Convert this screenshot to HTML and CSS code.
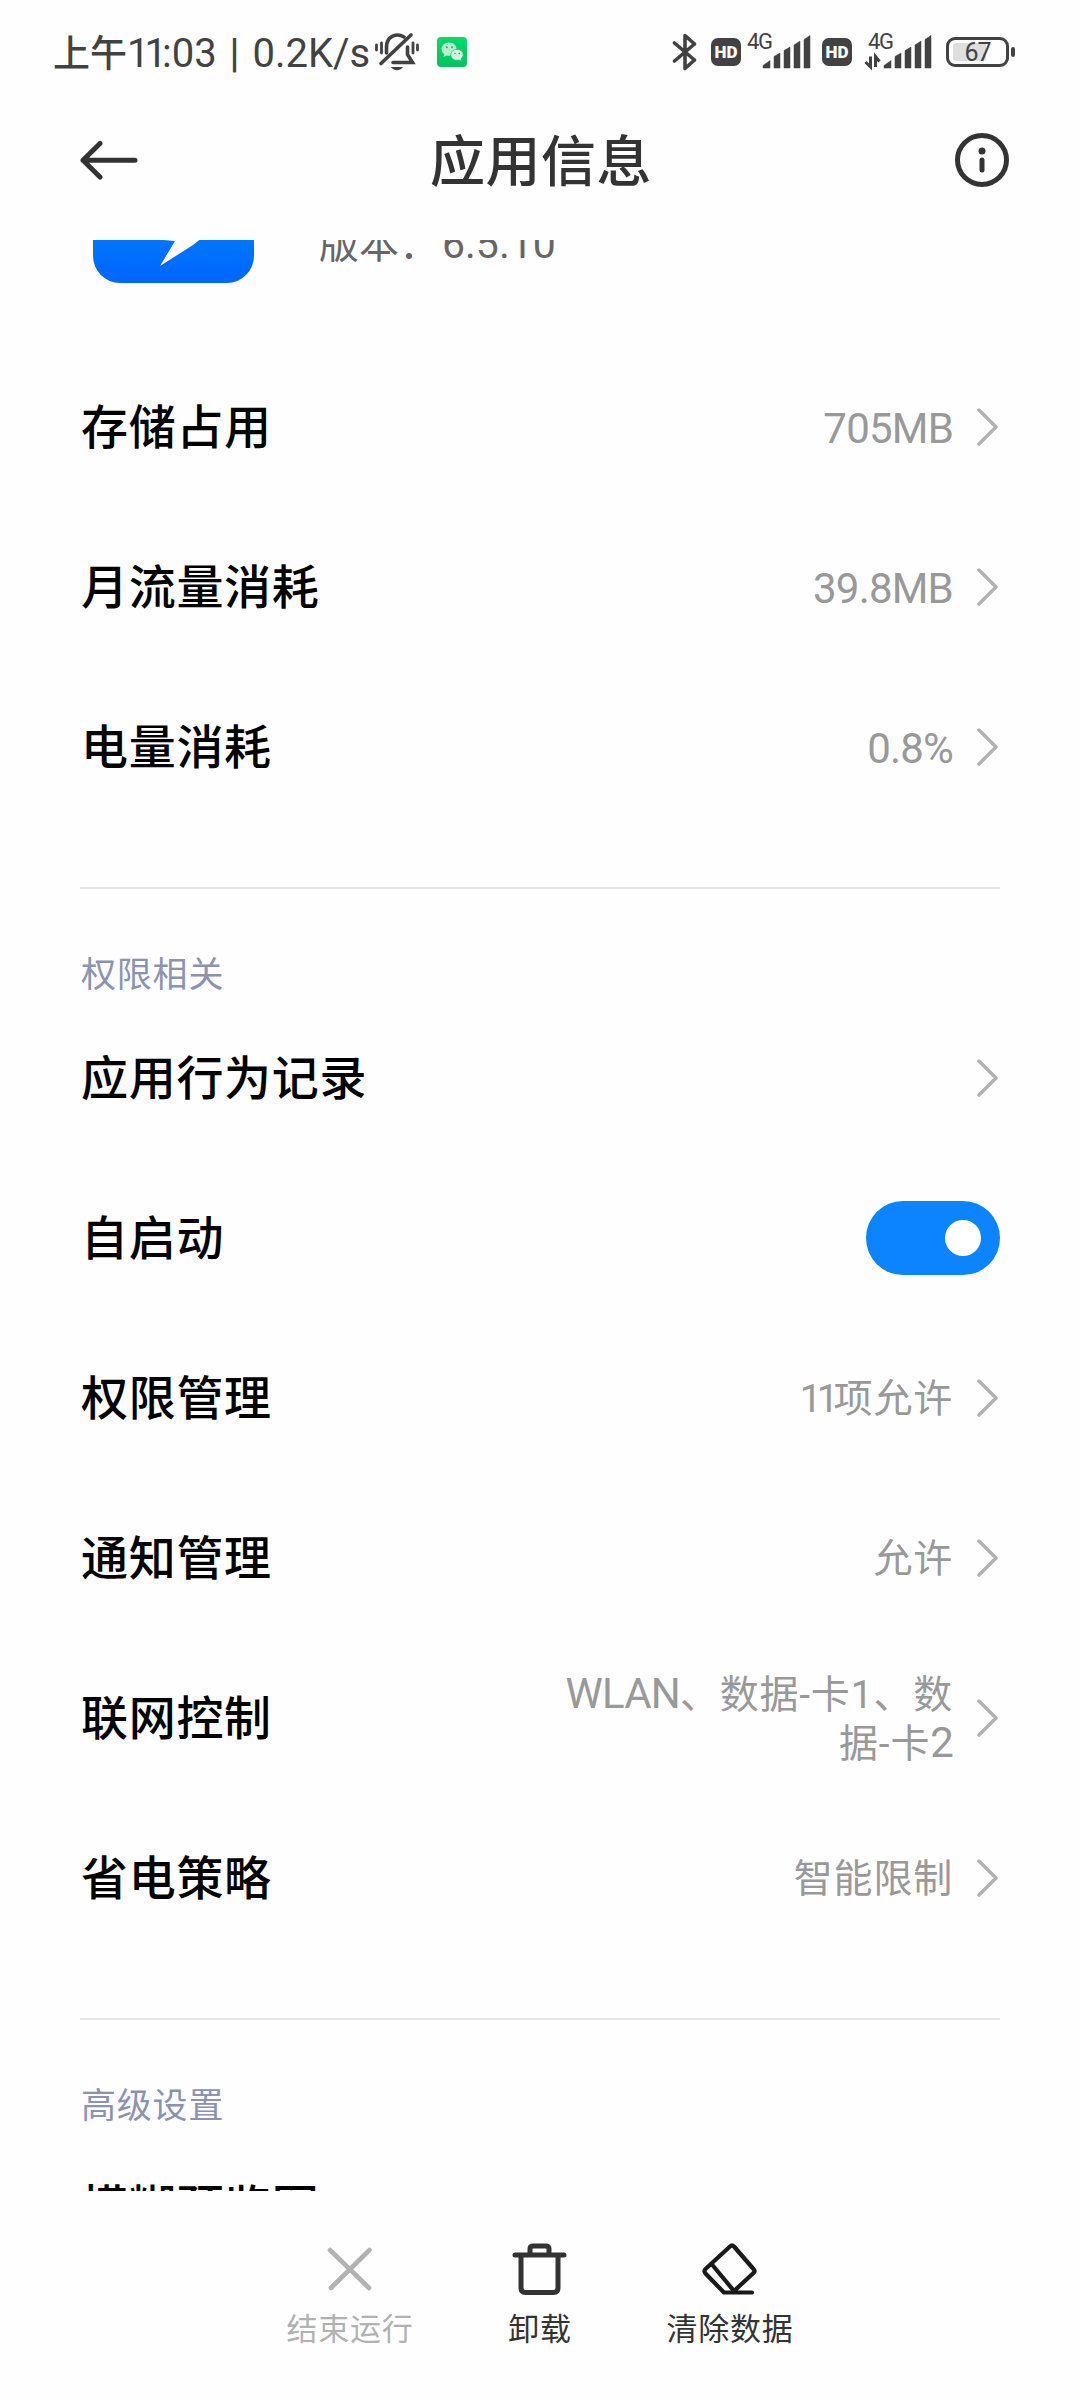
FILE: index.html
```html
<!DOCTYPE html>
<html lang="zh-CN">
<head>
    <meta charset="UTF-8">
    <title>应用信息</title>
    <link rel="stylesheet" href="styles.css">
</head>
<body>
    <!-- Status Bar -->
    <div class="status-bar">
        <span class="status-time"><span class="status-cjk">上午</span><span class="ones">11</span>:03 <b>|</b> 0.2K/s</span>
        <svg class="icon-mute" width="46" height="40" viewBox="0 0 46 40" fill="none" stroke="#424242" stroke-width="3.6" stroke-linecap="round">
            <path d="M12.500 21V15C12.500 4 23 .500 30 5"/>
            <path d="M33.500 15v7.500l5 8H19"/>
            <path d="M37 3L7 31.500"/>
            <path d="M2.500 13v5M7.500 11v10M39 11v10M43.500 13v5" stroke-width="2.800"/>
            <path d="M17 35h12c-1 2-3.500 3.200-6 3.200S18 37 17 35z" fill="#424242" stroke="none"/>
        </svg>
        <svg class="icon-wechat" width="30" height="30" viewBox="0 0 30 30">
            <defs>
                <linearGradient id="wechat" x1="0" y1="0" x2="0" y2="1">
                    <stop offset="0" stop-color="#05dc6c"/>
                    <stop offset="1" stop-color="#07c160"/>
                </linearGradient>
            </defs>
            <rect width="30" height="30" rx="4" fill="url(#wechat)"/>
            <path d="M12 5.500c-4.400 0-7.500 3-7.500 6.500 0 2.100 1 3.900 2.700 5.100L6.500 20l3-1.500c.8.200 1.600.300 2.500.300 4.300 0 7.500-3 7.500-6.700s-3.200-6.600-7.500-6.600z" fill="#b5f0cf"/>
            <path d="M20 12.300c-3.500 0-6.200 2.400-6.200 5.500s2.700 5.500 6.200 5.500c.7 0 1.400-.1 2-.3l2.600 1.300-.6-2.400c1.400-1 2.200-2.500 2.200-4.100 0-3.100-2.700-5.500-6.200-5.500z" fill="#d2f6e0" stroke="#0ccb66" stroke-width=".8"/>
            <g fill="#0bbd5e">
                <circle cx="9.800" cy="10.300" r="1"/>
                <circle cx="15" cy="10.300" r="1"/>
                <circle cx="18" cy="16.500" r=".8"/>
                <circle cx="22.200" cy="16.500" r=".8"/>
            </g>
        </svg>
        <div class="status-right">
            <svg class="icon-bluetooth" width="26" height="40" viewBox="0 0 26 40" fill="none" stroke="#424242" stroke-width="3.600" stroke-linecap="round" stroke-linejoin="round">
                <path d="M2.500 11l20 17L13 36.500V3.500l9.500 8.500-20 17"/>
            </svg>
            <span class="hd">HD</span>
            <svg class="signal" width="64" height="60" viewBox="0 -10 64 60" fill="#424242">
                <text class="net" x="0" y="17" textLength="26">4G</text>
                <path d="M16 36v-2.500l7-5V36zM27 36V24.500l6-3.500V36zM37 36V18.500l6-3.500V36zM47 36V13l6-4v27zM57 36V7.500l6-4V36z" stroke="#424242" stroke-width=".5" stroke-linejoin="round"/>
            </svg>
            <span class="hd">HD</span>
            <svg class="signal-data" width="68" height="60" viewBox="0 -10 68 60" fill="#424242">
                <text class="net" x="4" y="17" textLength="26">4G</text>
                <path d="M6.500 24.500V35L1.500 30M11.500 35V24.500l4 5" fill="none" stroke="#424242" stroke-width="3"/>
                <path d="M20 36v-2.500l7-5V36zM31 36V24.500l6-3.500V36zM41 36V18.500l6-3.500V36zM51 36V13l6-4v27zM61 36V7.500l6-4V36z" stroke="#424242" stroke-width=".5" stroke-linejoin="round"/>
            </svg>
            <span class="battery"><span class="battery-level"></span><span class="battery-text">67</span></span>
            <span class="battery-cap"></span>
        </div>
    </div>

    <!-- Title Bar -->
    <div class="header">
        <svg width="60" height="60" viewBox="0 0 60 60" fill="none" stroke="#333" stroke-width="5" stroke-linecap="round" stroke-linejoin="round">
            <path d="M55 30.300H3M20 13.500L3 30.300 20 47"/>
        </svg>
        <h1 class="title">应用信息</h1>
        <svg width="60" height="60" viewBox="0 0 60 60">
            <circle cx="32" cy="30" r="24.500" fill="none" stroke="#333" stroke-width="5"/>
            <circle cx="32" cy="21" r="3.500" fill="#333"/>
            <path d="M32 30v10" stroke="#333" stroke-width="5" stroke-linecap="round"/>
        </svg>
    </div>

    <div class="content">
        <div class="app">
            <svg width="161" height="161" viewBox="0 0 161 161">
                <defs>
                    <linearGradient id="app" x1="0" y1="0" x2="0" y2="1">
                        <stop offset="0" stop-color="#00a0ff"/>
                        <stop offset="1" stop-color="#0066ff"/>
                    </linearGradient>
                </defs>
                <rect width="161" height="161" rx="27" fill="url(#app)"/>
                <path d="M50 40l76 60q-14 14-26 23l-33 21 15-25-12-1z" fill="#fff"/>
            </svg>
            <div class="app-version">版本：<span class="digits">6.5.10</span></div>
        </div>

        <div class="row"><span class="label">存储占用</span><span class="value num">705MB</span><svg class="arrow" viewBox="0 0 22 38"><path d="M2 2l17 17L2 36"/></svg></div>
        <div class="row"><span class="label">月流量消耗</span><span class="value num">39.8MB</span><svg class="arrow" viewBox="0 0 22 38"><path d="M2 2l17 17L2 36"/></svg></div>
        <div class="row"><span class="label">电量消耗</span><span class="value num">0.8%</span><svg class="arrow" viewBox="0 0 22 38"><path d="M2 2l17 17L2 36"/></svg></div>

        <div class="section-title">权限相关</div>
        <div class="row"><span class="label">应用行为记录</span><svg class="arrow" viewBox="0 0 22 38"><path d="M2 2l17 17L2 36"/></svg></div>
        <div class="row"><span class="label">自启动</span><span class="switch"><span class="knob"></span></span></div>
        <div class="row"><span class="label">权限管理</span><span class="value"><span class="ones">11</span>项允许</span><svg class="arrow" viewBox="0 0 22 38"><path d="M2 2l17 17L2 36"/></svg></div>
        <div class="row"><span class="label">通知管理</span><span class="value">允许</span><svg class="arrow" viewBox="0 0 22 38"><path d="M2 2l17 17L2 36"/></svg></div>
        <div class="row"><span class="label">联网控制</span><span class="value"><span class="num">WLAN</span>、数据-卡1、数<br>据-卡<span class="num">2</span></span><svg class="arrow" viewBox="0 0 22 38"><path d="M2 2l17 17L2 36"/></svg></div>
        <div class="row"><span class="label">省电策略</span><span class="value">智能限制</span><svg class="arrow" viewBox="0 0 22 38"><path d="M2 2l17 17L2 36"/></svg></div>

        <div class="section-title">高级设置</div>
        <div class="row row-last"><span class="label">模糊预览图</span></div>
    </div>

    <!-- Bottom Actions -->
    <div class="actions">
        <div class="action disabled">
            <svg width="60" height="60" viewBox="0 0 60 60" fill="none" stroke="#b2b2b2" stroke-width="4.600" stroke-linecap="round">
                <path d="M10 11l39 38M49.500 11L11 49"/>
            </svg>
            <span>结束运行</span>
        </div>
        <div class="action">
            <svg width="60" height="60" viewBox="0 0 60 60" fill="none" stroke="#333" stroke-width="5" stroke-linecap="round" stroke-linejoin="round">
                <path d="M5 16h49M20 15V10q0-3 3-3h13q3 0 3 3v5M11 17v32q0 4.500 4.500 4.500h28q4.500 0 4.500-4.500V17"/>
            </svg>
            <span>卸载</span>
        </div>
        <div class="action">
            <svg width="60" height="60" viewBox="0 0 60 60" fill="none" stroke="#1a1a1a" stroke-width="4.200" stroke-linecap="round" stroke-linejoin="round">
                <path d="M30 7.500L5.500 30q-2 2 0 4.500L24 53.500h28M12 25.500L34 52M30 7.500q2-2 4 0L53.500 30q2 2 0 4L34 52"/>
            </svg>
            <span>清除数据</span>
        </div>
    </div>
</body>
</html>
```

FILE: styles.css
```css
* {
    box-sizing: border-box;
}
body {
    display: flex;
    flex-direction: column;
    width: 1080px;
    height: 2400px;
    margin: 0;
    background-color: #fefefe;
    color: #000;
    font-family: Roboto, "Noto Sans CJK SC", sans-serif;
    overflow: hidden;
}
svg {
    display: block;
    flex-shrink: 0;
}

/* Status bar */
.status-bar {
    display: flex;
    align-items: center;
    height: 104px;
    padding: 0 65px 0 53px;
    color: #424242;
}
.status-time {
    width: 321px;
    padding-bottom: 2px;
    font-size: 40px;
    word-spacing: 3px;
    white-space: nowrap;
}
.status-time b {
    font-weight: 500;
}
.status-cjk {
    font-size: 37px;
    font-weight: 500;
}
.ones {
    letter-spacing: -5px;
}
.icon-wechat {
    margin-left: 17px;
}
.status-right {
    display: flex;
    align-items: center;
    margin-left: auto;
}
.hd {
    width: 30px;
    height: 28px;
    border-radius: 7px;
    background-color: #424242;
    color: #fff;
    font-size: 17px;
    font-weight: 900;
    line-height: 29px;
    text-align: center;
}
.icon-bluetooth {
    margin-right: 13px;
}
.net {
    font-size: 22px;
}
.signal {
    margin: 0 11px 0 6px;
}
.signal-data {
    margin: 0 14px 0 12px;
}
.battery {
    position: relative;
    width: 63px;
    height: 30px;
    padding: 3px 4px;
    border: 3px solid #424242;
    border-radius: 9px;
}
.battery-level {
    display: block;
    width: 33px;
    height: 18px;
    border-radius: 3px;
    background-color: #dedede;
}
.battery-text {
    position: absolute;
    inset: 0;
    font-size: 25px;
    letter-spacing: -1px;
    line-height: 25px;
    text-align: center;
}
.battery-cap {
    width: 4px;
    height: 10px;
    margin-left: 2px;
    border-radius: 2px;
    background-color: #424242;
}

/* Title bar */
.header {
    display: flex;
    justify-content: space-between;
    align-items: center;
    height: 136px;
    padding: 0 70px 24px 80px;
}
.title {
    margin: 3px 0 0 -8px;
    color: #333;
    font-size: 55px;
    font-weight: 500;
    letter-spacing: 0.5px;
    line-height: 80px;
}

/* Scrolling list */
.content {
    height: 1951px;
    padding: 0 80px;
    overflow: hidden;
}
.app {
    display: flex;
    margin: -118px 0 64px 13px;
}
.app-version {
    margin: 94px 0 0 65px;
    color: #666;
    font-size: 40px;
    line-height: 56px;
}
.digits {
    margin-left: 3px;
    font-size: 41px;
}
.row {
    display: flex;
    align-items: center;
    height: 160px;
}
.row-last {
    margin-top: -2px;
}
.label {
    flex: 1;
    padding: 2px 0 0 1px;
    font-size: 47px;
    font-weight: 500;
    letter-spacing: 0.7px;
    line-height: 60px;
}
.value {
    padding-top: 2px;
    color: #999;
    font-size: 39px;
    letter-spacing: 0.8px;
    line-height: 47px;
    text-align: right;
}
.num {
    font-size: 42px;
    letter-spacing: -0.8px;
}
.arrow {
    width: 22px;
    height: 38px;
    margin: 0 1px 0 24px;
    fill: none;
    stroke: #b2b2b2;
    stroke-width: 3.5;
    stroke-linecap: round;
    stroke-linejoin: round;
}
.section-title {
    height: 111px;
    margin-top: 60px;
    padding: 63px 0 0 1px;
    border-top: 2px solid #e5e5e5;
    color: #8c93b0;
    font-size: 35px;
    letter-spacing: 0.8px;
    line-height: 48px;
}
.switch {
    display: flex;
    justify-content: flex-end;
    align-items: center;
    width: 134px;
    height: 74px;
    padding-right: 19px;
    border-radius: 37px;
    background-color: #0d84ff;
}
.knob {
    width: 36px;
    height: 36px;
    border-radius: 50%;
    background-color: #fff;
}

/* Bottom actions */
.actions {
    display: flex;
    justify-content: center;
    padding-top: 48px;
}
.action {
    display: flex;
    flex-direction: column;
    align-items: center;
    width: 190px;
    color: #333;
    font-size: 31px;
    letter-spacing: 0.8px;
    line-height: 61px;
}
.disabled {
    color: #b2b2b2;
}
```
